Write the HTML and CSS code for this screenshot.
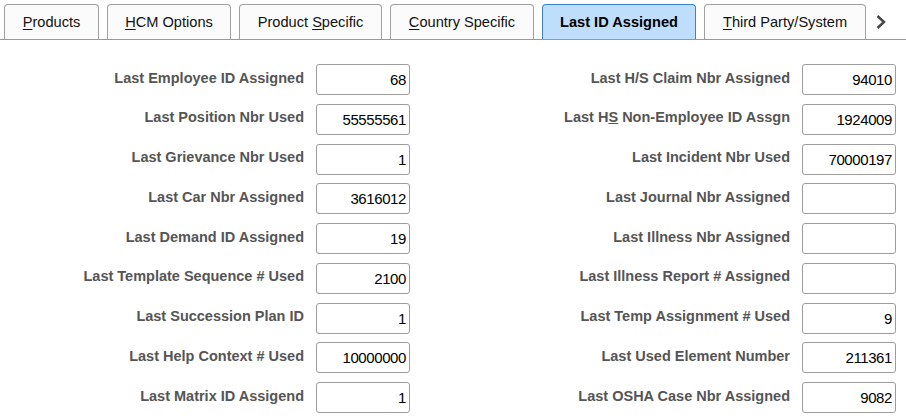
FILE: index.html
```html
<!DOCTYPE html>
<html lang="en">
<head>
<meta charset="utf-8">
<title>Last ID Assigned</title>
<link rel="stylesheet" href="styles.css">
</head>
<body>
<div class="tabbar">
  <div class="tab t-products"><span><u>P</u>roducts</span></div>
  <div class="tab t-hcm"><span><u>H</u>CM Options</span></div>
  <div class="tab t-product"><span>Product <u>S</u>pecific</span></div>
  <div class="tab t-country"><span><u>C</u>ountry Specific</span></div>
  <div class="tab t-lastid active"><span>Last ID Assigned</span></div>
  <div class="tab t-third"><span><u>T</u>hird Party/System</span></div>
  <div class="more">
    <svg width="12" height="16" viewBox="0 0 12 16"><polyline points="2.5,2 9,8 2.5,14" fill="none" stroke="#444" stroke-width="2.4"/></svg>
  </div>
</div>
<div class="form">
  <div class="label">Last Employee ID Assigned</div><div class="field">68</div>
  <div class="label">Last H/S Claim Nbr Assigned</div><div class="field">94010</div>

  <div class="label">Last Position Nbr Used</div><div class="field">55555561</div>
  <div class="label">Last H<u>S</u> Non-Employee ID Assgn</div><div class="field">1924009</div>

  <div class="label">Last Grievance Nbr Used</div><div class="field">1</div>
  <div class="label">Last Incident Nbr Used</div><div class="field">70000197</div>

  <div class="label">Last Car Nbr Assigned</div><div class="field">3616012</div>
  <div class="label">Last Journal Nbr Assigned</div><div class="field"></div>

  <div class="label">Last Demand ID Assigned</div><div class="field">19</div>
  <div class="label">Last Illness Nbr Assigned</div><div class="field"></div>

  <div class="label">Last Template Sequence # Used</div><div class="field">2100</div>
  <div class="label">Last Illness Report # Assigned</div><div class="field"></div>

  <div class="label">Last Succession Plan ID</div><div class="field">1</div>
  <div class="label">Last Temp Assignment # Used</div><div class="field">9</div>

  <div class="label">Last Help Context # Used</div><div class="field">10000000</div>
  <div class="label">Last Used Element Number</div><div class="field">211361</div>

  <div class="label">Last Matrix ID Assigend</div><div class="field">1</div>
  <div class="label">Last OSHA Case Nbr Assigned</div><div class="field">9082</div>
</div>
</body>
</html>
```
FILE: styles.css
```css
html, body {
  margin: 0;
  padding: 0;
  background: #ffffff;
}
body {
  font-family: "Liberation Sans", Arial, sans-serif;
  color: #000;
  width: 906px;
  height: 418px;
  overflow: hidden;
}
.tabbar {
  display: flex;
  align-items: flex-end;
  gap: 8px;
  padding: 4px 0 0 4px;
  border-bottom: 1px solid #999999;
  height: 35px;
}
.tab {
  box-sizing: border-box;
  flex: none;
  height: 35px;
  display: flex;
  align-items: center;
  justify-content: center;
  padding: 0 0 1px;
  border: 1px solid #a0a0a0;
  border-bottom: none;
  border-radius: 4px 4px 0 0;
  background: #fbfbfb;
  font-size: 14.6px;
  color: #111;
  white-space: nowrap;
}
.t-products { width: 95px; }
.t-hcm { width: 124px; }
.t-product { width: 143px; }
.t-country { width: 144px; }
.t-lastid { width: 154px; }
.t-third { width: 162px; }
.tab u {
  text-underline-offset: 2px;
}
.tab.active {
  background: #bfdefc;
  border-color: #3b80d0;
  font-weight: bold;
  color: #000;
}
.more {
  flex: 1;
  height: 35px;
  display: flex;
  align-items: center;
  padding-left: 1px;
}
.more svg {
  display: block;
}
.form {
  display: grid;
  grid-template-columns: 304px 94px 368px 94px;
  column-gap: 12px;
  row-gap: 8.75px;
  margin-top: 24px;
}
.label {
  text-align: right;
  font-weight: bold;
  font-size: 14.5px;
  line-height: 17px;
  padding-top: 5.5px;
  color: #555555;
  white-space: nowrap;
}
.field {
  box-sizing: border-box;
  height: 31px;
  border: 1px solid #9d9d9d;
  border-radius: 3px;
  padding: 0 3px;
  display: flex;
  align-items: center;
  justify-content: flex-end;
  font-size: 15px;
  letter-spacing: -0.4px;
  color: #000;
  background: #fff;
}
```
